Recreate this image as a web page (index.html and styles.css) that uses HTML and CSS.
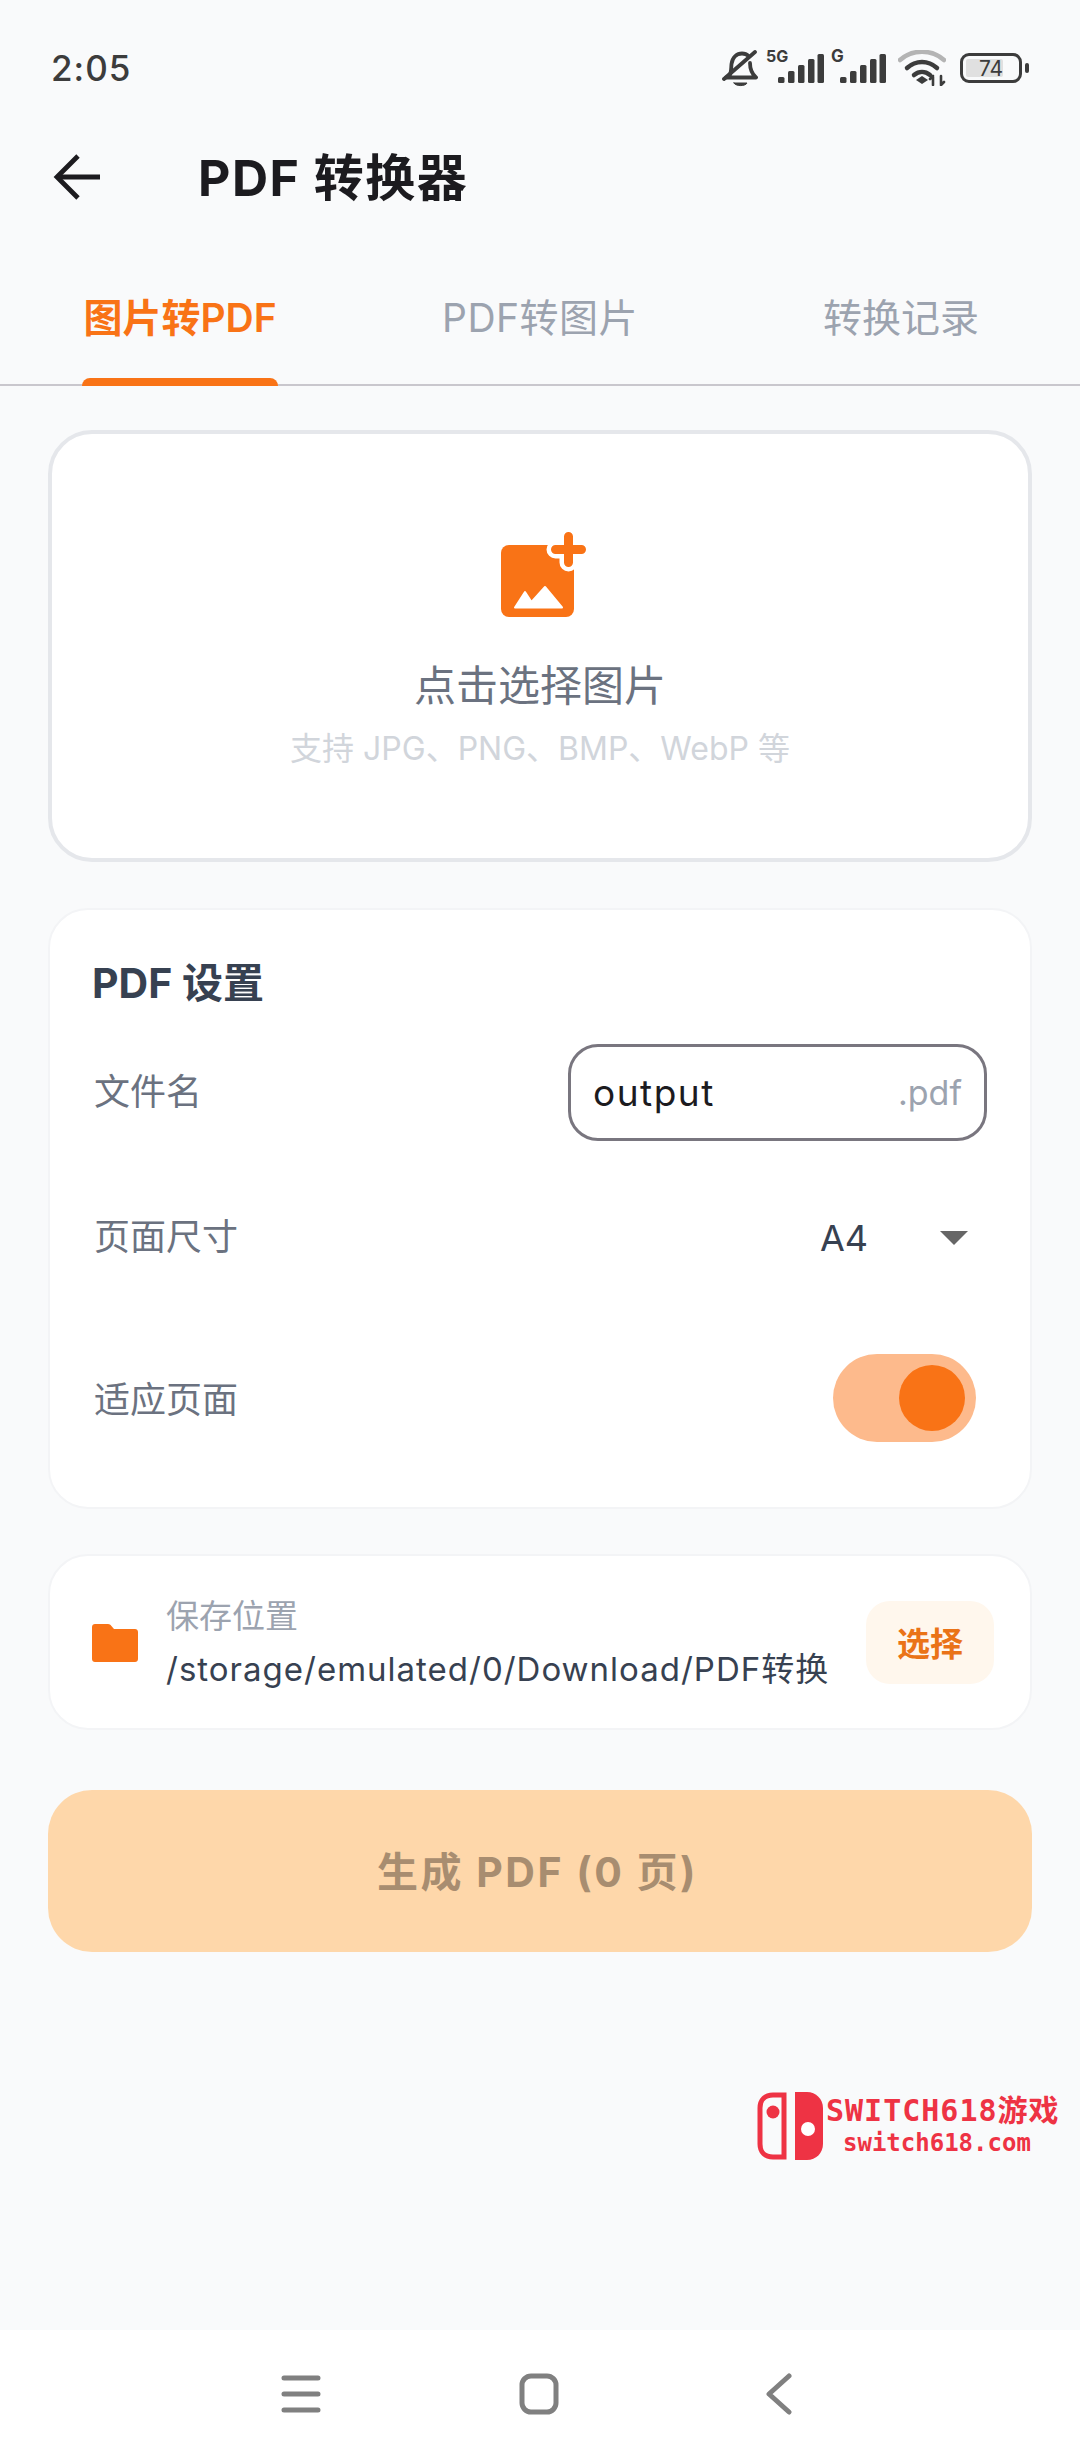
FILE: index.html
```html
<!DOCTYPE html>
<html lang="zh-CN">
<head>
<meta charset="utf-8">
<title>PDF 转换器</title>
<link rel="stylesheet" href="styles.css">
</head>
<body>
<div class="screen">
  <header class="status">
    <span class="time">2:05</span>
    <div class="status-icons">
      <svg class="ic-bell" width="36" height="38" viewBox="0 0 36 38" fill="none" stroke="#3c3c3c" stroke-width="3.800" stroke-linecap="round" stroke-linejoin="round">
        <path d="M7 27c2.500-4 2-8 2.500-13C10.500 7 15 3.500 20 3.500c3 0 5 1 6.500 2.500"/>
        <path d="M28 13c0 6 1 10 6 14.500H4"/>
        <path d="M2 29 33 2"/>
        <path d="M12 33h13c-1.500 3.500-11.500 3.500-13 0z" fill="#3c3c3c" stroke-width="1"/>
      </svg>
      <div class="sim">
        <span class="sim-label">5G</span>
        <svg width="46" height="30" viewBox="0 0 46 30" fill="#3c3c3c"><rect x="0" y="23" width="6.500" height="6" rx="1.500"/><rect x="10" y="17" width="6.500" height="12" rx="1.500"/><rect x="20" y="11" width="6.500" height="18" rx="1.500"/><rect x="30" y="5" width="6.500" height="24" rx="1.500"/><rect x="39.500" y="0" width="6.500" height="29" rx="1.500"/></svg>
      </div>
      <div class="sim sim-g">
        <span class="sim-label">G</span>
        <svg width="46" height="30" viewBox="0 0 46 30" fill="#3c3c3c"><rect x="0" y="23" width="6.500" height="6" rx="1.500"/><rect x="10" y="17" width="6.500" height="12" rx="1.500"/><rect x="20" y="11" width="6.500" height="18" rx="1.500"/><rect x="30" y="5" width="6.500" height="24" rx="1.500"/><rect x="39.500" y="0" width="6.500" height="29" rx="1.500"/></svg>
      </div>
      <svg class="ic-wifi" width="48" height="36" viewBox="0 0 48 36" fill="none" stroke-linecap="round">
        <path d="M2 10C14-1 34-1 46 10" stroke="#b4b4b4" stroke-width="4.500"/>
        <path d="M9 18c9-8 21-8 30 0" stroke="#3c3c3c" stroke-width="4.500"/>
        <path d="M16 25c5-4 11-4 16 0" stroke="#3c3c3c" stroke-width="4.500"/>
        <path d="M18 30l6-4 6 4-6 4z" fill="#3c3c3c"/>
        <path d="M35 35v-8M32 29l3-3M43 26v8M46 32l-3 3" stroke="#3c3c3c" stroke-width="2.600"/>
      </svg>
      <div class="battery">
        <div class="battery-body"><span class="battery-fill"></span><span class="battery-num">74</span></div>
        <span class="battery-nub"></span>
      </div>
    </div>
  </header>

  <div class="appbar">
    <svg class="back" width="48" height="48" viewBox="0 0 48 48" fill="none" stroke="#1c1b1f" stroke-width="4.800"><path d="M47 24H4"/><path d="M25 3 4 24l21 21"/></svg>
    <h1 class="title">PDF 转换器</h1>
  </div>

  <nav class="tabs">
    <div class="tab tab-active">图片转PDF</div>
    <div class="tab tab-mid">PDF转图片</div>
    <div class="tab tab-end">转换记录</div>
  </nav>

  <main class="content">
    <section class="upload">
      <svg class="upload-icon" width="86" height="86" viewBox="0 0 86 86">
        <rect x="0" y="13" width="73" height="72" rx="8" fill="#f97316"/>
        <path fill="#fff" stroke="#fff" stroke-width="2" stroke-linejoin="round" d="M14 75.500 24 60l6.500 10L44 55l17 20.500z"/>
        <path d="M54.500 17.500h26M67.500 4.500v26" stroke="#fff" stroke-width="18" stroke-linecap="round" fill="none"/>
        <path d="M54.500 17.500h26M67.500 4.500v26" stroke="#f97316" stroke-width="9" stroke-linecap="round" fill="none"/>
      </svg>
      <div class="upload-title">点击选择图片</div>
      <div class="upload-sub">支持 JPG、PNG、BMP、WebP 等</div>
    </section>

    <section class="card settings">
      <h2 class="settings-title">PDF 设置</h2>
      <div class="row row-name">
        <span class="label">文件名</span>
        <div class="input"><span class="input-value">output</span><span class="input-suffix">.pdf</span></div>
      </div>
      <div class="row row-size">
        <span class="label">页面尺寸</span>
        <div class="select"><span class="select-value">A4</span><span class="caret"></span></div>
      </div>
      <div class="row row-fit">
        <span class="label">适应页面</span>
        <div class="switch"><span class="thumb"></span></div>
      </div>
    </section>

    <section class="card save">
      <svg class="folder" width="46" height="38" viewBox="0 0 46 38"><path fill="#f97316" d="M3 0h13c1.500 0 2.500.7 3.200 1.800L22 5h21c1.700 0 3 1.300 3 3v27c0 1.700-1.300 3-3 3H3c-1.700 0-3-1.300-3-3V3c0-1.700 1.300-3 3-3z"/></svg>
      <div class="save-text">
        <div class="save-label">保存位置</div>
        <div class="save-path">/storage/emulated/0/Download/PDF转换</div>
      </div>
      <div class="pick">选择</div>
    </section>

    <div class="generate">生成 PDF (0 页)</div>
  </main>

  <div class="watermark">
    <svg width="66" height="68" viewBox="0 0 66 68">
      <path fill="none" stroke="#ee3344" stroke-width="5" d="M27 3H16C8 3 3 8 3 16v36c0 8 5 13 13 13h11z"/>
      <circle cx="16" cy="20" r="6.500" fill="#ee3344"/>
      <path fill="#ee3344" d="M38 0h12c9 0 16 7 16 16v36c0 9-7 16-16 16H38z"/>
      <circle cx="51" cy="37" r="7" fill="#fff"/>
    </svg>
    <div class="wm-text">
      <div class="wm-top">SWITCH618游戏</div>
      <div class="wm-bot">switch618.com</div>
    </div>
  </div>

  <footer class="navbar">
    <svg width="40" height="38" viewBox="0 0 40 38" fill="none" stroke="#808080" stroke-width="5" stroke-linecap="round"><path d="M3 3h34M3 19h34M3 35h34"/></svg>
    <svg class="nav-home" width="40" height="42" viewBox="0 0 40 42" fill="none" stroke="#808080" stroke-width="5"><rect x="3" y="3" width="34" height="36" rx="9"/></svg>
    <svg class="nav-back" width="26" height="42" viewBox="0 0 26 42" fill="none" stroke="#808080" stroke-width="5" stroke-linecap="round" stroke-linejoin="round"><path d="M23 3 3 21l20 18"/></svg>
  </footer>
</div>
</body>
</html>
```

FILE: styles.css
```css
* { box-sizing: border-box; margin: 0; padding: 0; }
html, body { width: 1080px; height: 2460px; overflow: hidden; }
body { font-family: Inter, "Noto Sans CJK SC", "Noto Sans", sans-serif; background: #f9fafb; }

.screen { position: relative; width: 1080px; height: 2460px; display: flex; flex-direction: column; background: #f9fafb; }

.status { height: 136px; padding: 0 51px 0 51px; display: flex; align-items: center; justify-content: space-between; }
.time { font-size: 35px; font-weight: 500; color: #3c3c3c; letter-spacing: 1px; }
.status-icons { display: flex; align-items: flex-end; height: 40px; }
.ic-bell { margin-right: 20px; }
.sim { position: relative; width: 46px; height: 30px; margin-right: 16px; margin-bottom: 4px; }
.sim-g { margin-right: 12px; }
.sim svg { display: block; }
.sim-label { position: absolute; left: -12px; top: -6px; font-size: 16px; line-height: 16px; font-weight: 700; color: #3c3c3c; }
.sim-g .sim-label { left: -9px; font-size: 17px; }
.ic-wifi { margin: 0 14px 2px 0; }
.battery { display: flex; align-items: center; margin-bottom: 5px; }
.battery-body { position: relative; width: 62px; height: 30px; border: 3.500px solid #3c3c3c; border-radius: 9px; display: flex; align-items: center; justify-content: center; }
.battery-fill { position: absolute; left: 3px; top: 3px; bottom: 3px; width: 37px; background: #e0e0e0; border-radius: 2px; }
.battery-num { position: relative; font-size: 21px; color: #3c3c3c; }
.battery-nub { width: 4px; height: 10px; margin-left: 3px; background: #3c3c3c; border-radius: 2px; }

.appbar { height: 84px; padding-left: 53px; display: flex; align-items: center; }
.back { flex: none; margin-top: -3px; }
.title { margin: -8px 0 0 97px; font-size: 50px; font-weight: 700; color: #1c1b1f; letter-spacing: 1.500px; }

.tabs { height: 166px; padding-bottom: 0; display: flex; border-bottom: 2px solid #c9c7cd; position: relative; }
.tab { position: absolute; top: 70px; font-size: 39px; line-height: 56px; color: #9ca3af; white-space: nowrap; }
.tab-active { left: 82px; width: 196px; height: 96px; text-align: center; color: #f97316; font-weight: 600; }
.tab-active::after { content: ""; position: absolute; left: 0; right: 0; bottom: 0; height: 8px; background: #f97316; border-radius: 8px 8px 0 0; }
.tab-mid { left: 442px; letter-spacing: 0.500px; }
.tab-end { left: 823px; }

.content { padding: 44px 48px 0; display: flex; flex-direction: column; }

.upload { height: 432px; background: #fff; border: 4px solid #e5e7eb; border-radius: 44px; display: flex; flex-direction: column; align-items: center; padding-top: 98px; }
.upload-icon { margin-left: 7px; }
.upload-title { margin-top: 39px; font-size: 42px; line-height: 58px; color: #6b7280; }
.upload-sub { margin-top: 12px; font-size: 32px; line-height: 44px; color: #d1d5db; }

.card { background: #fff; border: 2px solid #f3f4f6; border-radius: 40px; }
.settings { margin-top: 46px; height: 601px; padding: 0 44px; position: relative; display: flex; flex-direction: column; }
.settings-title { margin: 47px 0 0 -2px; font-size: 41px; line-height: 52px; font-weight: 700; color: #374151; }
.row { display: flex; align-items: center; justify-content: space-between; }
.label { font-size: 36px; color: #6b7280; }
.row-name { margin-top: 35px; height: 97px; }
.row-name .label { margin-bottom: 8px; }
.input { width: 419px; height: 97px; margin-right: -1px; border: 3px solid #79767f; border-radius: 30px; padding: 0 22px; display: flex; align-items: center; justify-content: space-between; }
.input-value { font-size: 37px; color: #1c1b1f; letter-spacing: 1.500px; }
.input-suffix { font-size: 34px; color: #9ca3af; }
.row-size { margin-top: 45px; height: 96px; }
.select { display: flex; align-items: center; margin: 8px 18px 0 0; }
.select-value { font-size: 36px; color: #374151; }
.caret { width: 0; height: 0; margin-left: 72px; border-left: 14px solid transparent; border-right: 14px solid transparent; border-top: 14px solid #666; }
.row-fit { margin-top: 72px; height: 88px; }
.row-fit .label { margin-bottom: 2px; }
.switch { position: relative; width: 143px; height: 88px; margin-right: 10px; border-radius: 44px; background: #fdba8c; }
.thumb { position: absolute; right: 11px; top: 11px; width: 66px; height: 66px; border-radius: 50%; background: #f97316; }

.save { margin-top: 45px; height: 176px; padding: 0 36px 0 42px; display: flex; align-items: center; }
.folder { flex: none; margin-top: 2px; }
.save-text { flex: 1; margin: 2px 0 0 28px; }
.save-label { font-size: 33px; line-height: 48px; color: #9ca3af; }
.save-path { margin-top: 4px; font-size: 33px; line-height: 50px; color: #374151; letter-spacing: 1px; white-space: nowrap; }
.pick { width: 128px; height: 83px; border-radius: 24px; background: #fff7ed; color: #ea7317; font-size: 33px; font-weight: 600; display: flex; align-items: center; justify-content: center; }

.generate { margin-top: 60px; height: 162px; padding: 0 5px 4px 0; border-radius: 44px; background: #fed7aa; color: #a88d70; font-size: 41px; font-weight: 700; display: flex; align-items: center; justify-content: center; letter-spacing: 2.500px; white-space: pre; }

.watermark { position: absolute; left: 757px; top: 2092px; display: flex; align-items: flex-start; color: #ee3344; }
.wm-text { margin-left: 3px; display: flex; flex-direction: column; }
.wm-top { font-family: "DejaVu Sans Mono", "Noto Sans CJK SC", monospace; font-size: 30px; line-height: 38px; font-weight: 700; letter-spacing: 1px; white-space: nowrap; }
.wm-bot { margin: -1px 0 0 17px; font-family: "DejaVu Sans Mono", monospace; font-size: 24px; line-height: 28px; font-weight: 700; white-space: nowrap; }

.navbar { position: absolute; left: 0; right: 0; bottom: 0; height: 130px; background: #fff; display: flex; align-items: center; padding: 0 0 2px 281px; }
.nav-home { margin-left: 198px; }
.nav-back { margin-left: 207px; }
```
